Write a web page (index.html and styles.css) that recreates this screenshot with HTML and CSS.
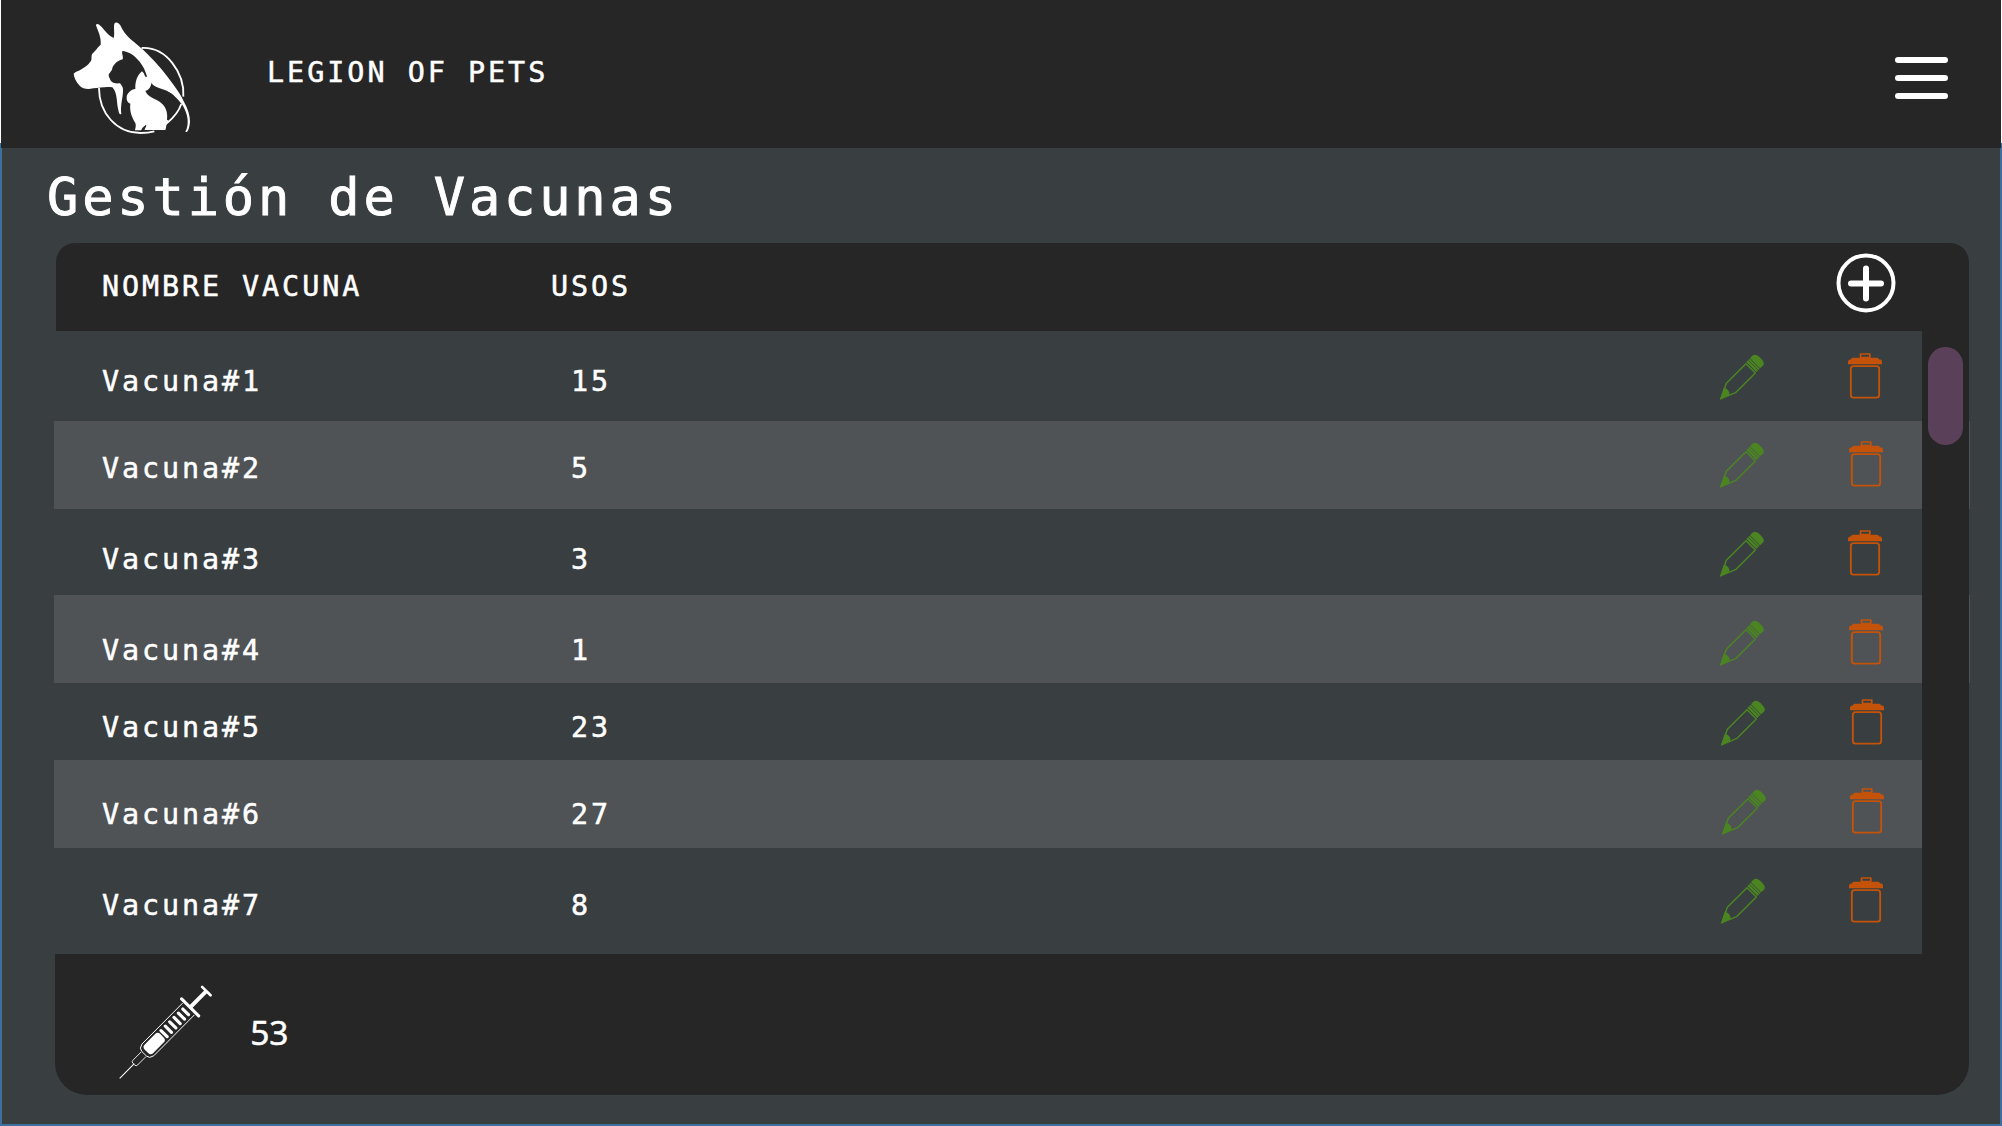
FILE: index.html
```html
<!DOCTYPE html>
<html lang="es">
<head>
<meta charset="utf-8">
<title>Legion of Pets - Gestión de Vacunas</title>
<link rel="stylesheet" href="styles.css">
</head>
<body>
<svg class="defs" aria-hidden="true">
  <symbol id="pencil" viewBox="0 0 135 138">
    <path d="M6 134 22 88 81 29 109 57 51 115Z" fill="none" stroke="currentColor" stroke-width="4.5" stroke-linejoin="round"/>
    <path d="M2 138 14 102C24 102 33 112 31 122Z" fill="currentColor"/>
    <path d="M82 24 87 19 117 49 112 54Z" fill="currentColor"/>
    <path d="M88 18 92 14 122 44 118 48Z" fill="currentColor"/>
    <path d="M93 13 99 6C104 1 111 1 116 5 124 10 130 17 133 23 136 29 134 33 131 36L123 43Z" fill="currentColor"/>
  </symbol>
  <symbol id="trash" viewBox="0 0 102 137">
    <path d="M37.500 14V2.500H65.500V14" fill="none" stroke="currentColor" stroke-width="5" stroke-linejoin="round"/>
    <path d="M36 11H66V14H88Q92 15 93 19H98Q102 21 102 26V33H0V26Q0 21 5 19H9Q10 15 14 14H36Z" fill="currentColor"/>
    <rect x="8.500" y="39" width="85" height="94.500" rx="8" fill="none" stroke="currentColor" stroke-width="5.500"/>
  </symbol>
</svg>

<header class="appbar">
  <svg class="logo" viewBox="0 0 540 444" fill="#fff">
    <path d="M147 264C147 340 200 399 272 399 288 399 302 397 313 394M352 368C372 352 387 332 394 312M400 290C404 220 350 140 275 144" fill="none" stroke="#fff" stroke-width="5.500"/>
    <path d="M138 76C139 69 146 71 152 78 166 93 177 108 191 114 195 100 190 82 193 71 197 64 206 68 211 76 218 91 227 105 241 117 258 131 276 145 293 163 323 192 350 226 371 255 384 274 396 290 401 304 414 327 420 347 420 365 419 379 416 390 411 396 406 397 405 394 409 389 417 368 414 343 397 314 383 297 369 280 350 272 330 264 314 262 304 249L286 234 291 229C283 196 253 156 217 153 214 160 221 170 218 178 205 181 192 191 187 204 187 213 178 217 176 225 176 232 180 235 181 240 187 250 197 251 210 250 216 257 219 262 219 270 220 290 210 315 214 342 209 346 206 338 205 330 199 307 203 278 187 262 165 259 151 264 130 265 115 268 99 268 89 257 78 246 72 232 71 221 75 215 85 213 92 209 105 201 115 194 121 185 128 177 122 169 127 161 136 153 140 145 152 134 154 112 144 93 138 76Z"/>
    <path d="M276 214C262 225 255 244 256 267 243 268 231 280 230 291 229 302 233 308 241 311 238 334 246 352 256 369 259 378 256 384 255 391H274C275 384 280 380 288 374 291 379 284 384 284 390H346C350 382 347 377 351 373 358 367 355 360 351 359 354 335 347 318 329 305 313 294 295 293 286 273 296 270 303 261 304 249L302 234 286 230Q283 219 276 214Z"/>
  </svg>
  <div class="brand">LEGION OF PETS</div>
  <button class="menu" aria-label="Menú"><span></span><span></span><span></span></button>
</header>

<main class="page">
  <h1 class="title">Gestión de Vacunas</h1>
  <section class="panel">
    <div class="head">
      <div class="name">NOMBRE VACUNA</div>
      <div class="uses">USOS</div>
      <svg class="add" viewBox="0 0 60 60" fill="none" stroke="#fff"><circle cx="30" cy="30" r="27.500" stroke-width="4"/><path d="M15 30.500H45M30 15.500V45.500" stroke-width="6" stroke-linecap="round"/></svg>
    </div>
    <div class="body">
      <div class="rows">
        <div class="row r1"><div class="name">Vacuna#1</div><div class="uses">15</div><div class="actions"><svg class="edit"><use href="#pencil"/></svg><svg class="del"><use href="#trash"/></svg></div></div>
        <div class="row r2 alt"><div class="name">Vacuna#2</div><div class="uses">5</div><div class="actions"><svg class="edit"><use href="#pencil"/></svg><svg class="del"><use href="#trash"/></svg></div></div>
        <div class="row r3"><div class="name">Vacuna#3</div><div class="uses">3</div><div class="actions"><svg class="edit"><use href="#pencil"/></svg><svg class="del"><use href="#trash"/></svg></div></div>
        <div class="row r4 alt"><div class="name">Vacuna#4</div><div class="uses">1</div><div class="actions"><svg class="edit"><use href="#pencil"/></svg><svg class="del"><use href="#trash"/></svg></div></div>
        <div class="row r5"><div class="name">Vacuna#5</div><div class="uses">23</div><div class="actions"><svg class="edit"><use href="#pencil"/></svg><svg class="del"><use href="#trash"/></svg></div></div>
        <div class="row r6 alt"><div class="name">Vacuna#6</div><div class="uses">27</div><div class="actions"><svg class="edit"><use href="#pencil"/></svg><svg class="del"><use href="#trash"/></svg></div></div>
        <div class="row r7"><div class="name">Vacuna#7</div><div class="uses">8</div><div class="actions"><svg class="edit"><use href="#pencil"/></svg><svg class="del"><use href="#trash"/></svg></div></div>
      </div>
      <div class="track"><div class="thumb"></div></div>
      <div class="edge"><i class="e1"></i><i class="e2"></i></div>
    </div>
    <footer class="foot">
      <svg class="syringe" viewBox="230 130 290 292" fill="none" stroke="#fff">
        <g transform="translate(238 416) rotate(-45.200)">
          <path d="M0 0H62" stroke-width="3"/>
          <path d="M102-10H66Q60-10 60-4V4Q60 10 66 10H102" stroke-width="2.500"/>
          <path d="M293-25H120Q104-22 104-10V10Q104 22 120 25H293" stroke-width="2.800"/>
          <rect x="114" y="-18" width="66" height="36" rx="11" fill="#fff" stroke="none"/>
          <path d="M189-13V13M207.500-13V13M226-13V13M244.500-13V13M263-13V13M281-12V12" stroke-width="9.500" stroke-linecap="round"/>
          <path d="M300-36V36" stroke-width="9.500" stroke-linecap="round"/>
          <path d="M300 0H368" stroke-width="12"/>
          <path d="M369-18V18" stroke-width="8" stroke-linecap="round"/>
        </g>
      </svg>
      <div class="total">53</div>
    </footer>
  </section>
</main>
</body>
</html>
```
FILE: styles.css
```css
* { box-sizing: border-box; }

body {
  margin: 0;
  width: 2002px;
  height: 1126px;
  overflow: hidden;
  background: #393e41;
  color: #fff;
  font: 28.4px/30px "DejaVu Sans Mono", "Liberation Mono", monospace;
  letter-spacing: 2.92px;
  -webkit-text-stroke: 0.5px #fff;
}

.defs { position: absolute; width: 0; height: 0; }

.appbar {
  display: flex;
  align-items: flex-start;
  height: 148px;
  padding-right: 53px;
  background: #262626;
  border: solid #fff;
  border-width: 0 1px;
  border-image: linear-gradient(#fff 142px, #3d709f 142px) 1;
}
.logo { width: 180px; height: 148px; margin-left: 49px; }
.brand { margin: 58px 0 0 37px; letter-spacing: 3px; }
.menu {
  display: flex;
  flex-direction: column;
  gap: 12px;
  width: 53px;
  margin: 57px 0 0 auto;
  padding: 0;
  border: 0;
  background: none;
}
.menu span { height: 6px; border-radius: 3px; background: #fff; }

.page {
  height: 978px;
  padding: 24px 30px 0 52px;
  border: solid #3d709f;
  border-width: 0 2px 2px;
}
.title {
  margin: 0 0 0 -7px;
  height: 71px;
  font-size: 52px;
  font-weight: 400;
  line-height: 50px;
  letter-spacing: 3.85px;
  -webkit-text-stroke-width: 0.9px;
}

.head {
  display: flex;
  align-items: flex-start;
  height: 88px;
  margin: 0 1px 0 2px;
  padding-left: 46px;
  background: #262626;
  border-radius: 19px 19px 0 0;
}
.name { width: 469px; }
.head .name { width: 449px; margin-top: 29px; }
.head .uses { margin-top: 29px; }
.add { width: 60px; height: 60px; margin: 10px 73px 0 auto; }

.body { display: flex; height: 623px; }
.rows { width: 1868px; flex: none; }
.row {
  display: flex;
  align-items: flex-start;
  padding-left: 48px;
}
.alt { background: #4f5355; }
.actions { display: flex; align-items: flex-start; margin-left: auto; padding-right: 40px; }
.edit { width: 45px; height: 46px; margin: 1px 84.5px 0 0; color: #4a8522; }
.del { width: 34px; height: 46px; color: #c45309; }

.r1 { height: 90px; } .r1 > * { margin-top: 36px; } .r1 .actions { margin-top: 22px; }
.r2 { height: 88px; } .r2 > * { margin-top: 33px; } .r2 .actions { margin-top: 20px; }
.r3 { height: 86px; } .r3 > * { margin-top: 36px; } .r3 .actions { margin-top: 21px; }
.r4 { height: 88px; } .r4 > * { margin-top: 41px; } .r4 .actions { margin-top: 24px; }
.r5 { height: 77px; } .r5 > * { margin-top: 30px; } .r5 .actions { margin-top: 16px; }
.r6 { height: 88px; } .r6 > * { margin-top: 40px; } .r6 .actions { margin-top: 28px; }
.r7 { height: 106px; } .r7 > * { margin-top: 43px; } .r7 .actions { margin-top: 29px; }
.r2 .actions, .r4 .actions, .r7 .actions { padding-right: 39px; }
.r5 .actions, .r6 .actions { padding-right: 38px; }
.r2 .edit, .r4 .edit, .r5 .edit { margin-right: 85.5px; }

.track { width: 47px; flex: none; padding: 16px 6px 0; background: #262626; }
.thumb { height: 98px; border-radius: 17.5px; background: #5b4059; }
.edge { width: 1px; padding-top: 90px; }
.edge i { display: block; height: 88px; background: #4f5355; }
.edge .e2 { margin-top: 86px; }

.foot {
  display: flex;
  align-items: flex-start;
  height: 141px;
  margin: 0 1px;
  padding-left: 62px;
  background: #262626;
  border-radius: 0 0 32px 32px;
}
.syringe { width: 96.7px; height: 97.3px; margin-top: 29px; }
.total {
  margin: 54px 0 0 36.5px;
  font: 33.5px/48px "Noto Sans", "Open Sans", sans-serif;
  letter-spacing: 0;
}
```
